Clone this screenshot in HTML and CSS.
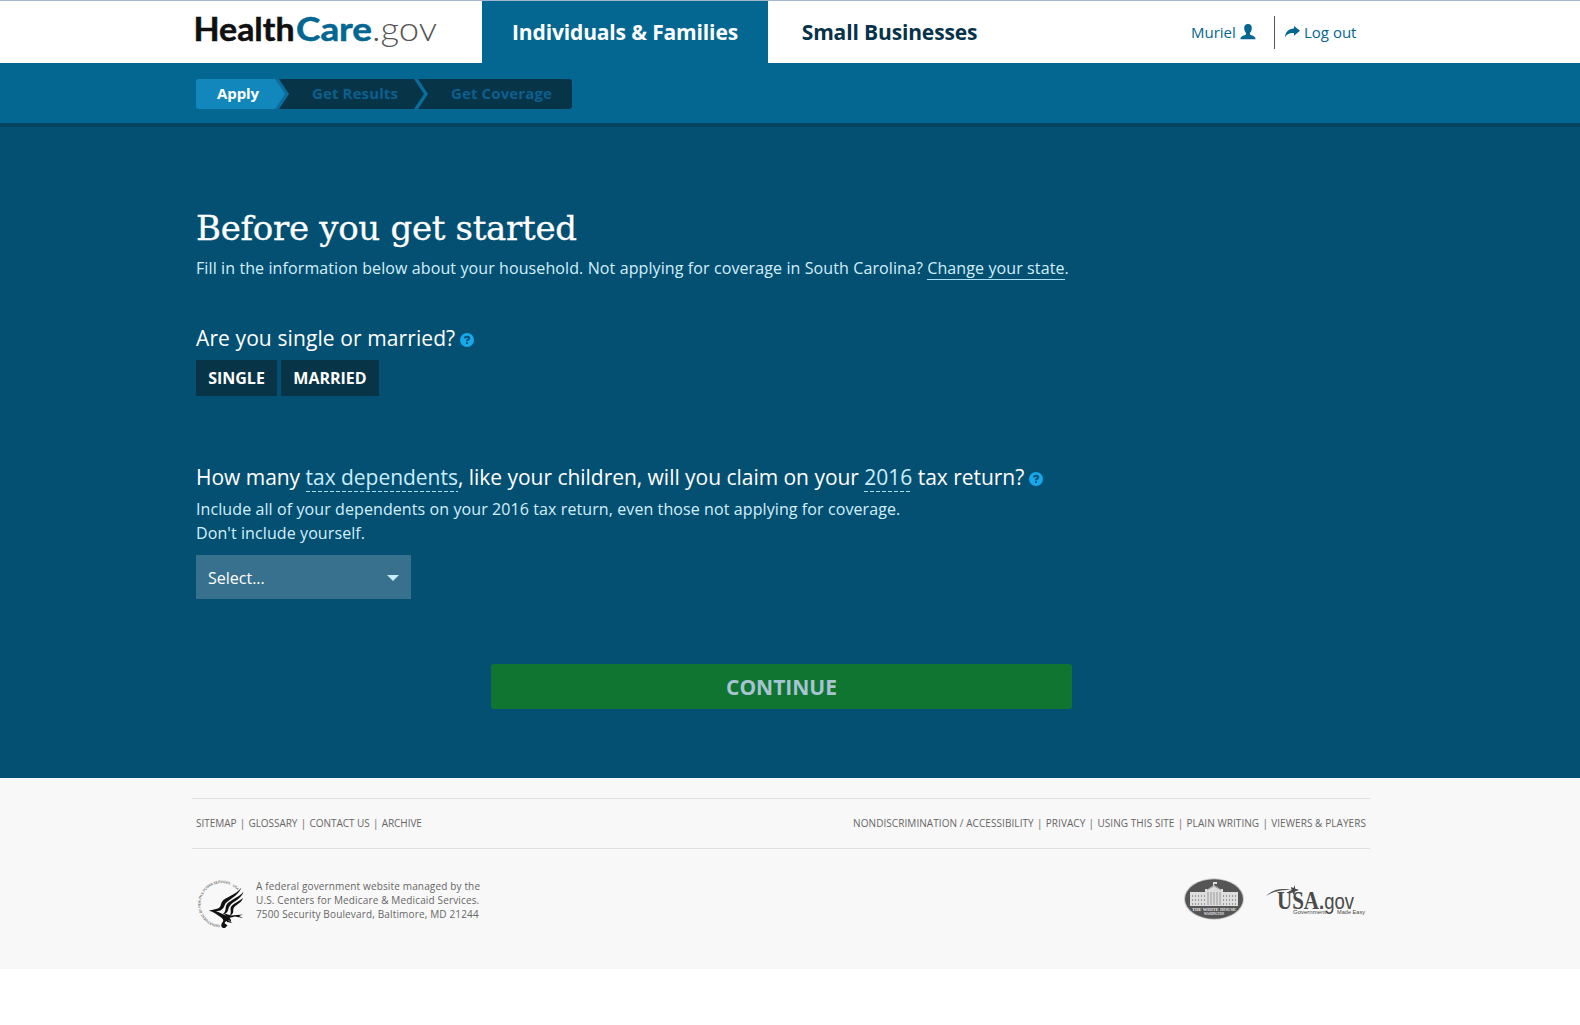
FILE: index.html
```html
<!DOCTYPE html>
<html lang="en">
<head>
<meta charset="utf-8">
<title>HealthCare.gov</title>
<link rel="stylesheet" href="styles.css">
</head>
<body>
<header class="header">
  <a class="logo">
    <svg width="244" height="40" viewBox="0 0 244 40" aria-label="HealthCare.gov">
      <text class="logo-bold" x="-2.500" y="31" textLength="101" lengthAdjust="spacingAndGlyphs">Health</text>
      <text class="logo-bold logo-blue" x="100" y="31" textLength="76" lengthAdjust="spacingAndGlyphs">Care</text>
      <text class="logo-light" x="176" y="31" textLength="65" lengthAdjust="spacingAndGlyphs">.gov</text>
    </svg>
  </a>
  <nav class="tabs">
    <a class="tab tab-active"><span>Individuals &amp; Families</span></a>
    <a class="tab"><span>Small Businesses</span></a>
  </nav>
  <div class="account">
    <a class="user">Muriel
      <svg width="16" height="16" viewBox="0 0 16 16"><path d="M8 0C10.500 0 11.800 1.500 11.800 4C11.800 6 11.100 7.800 10 8.900V10.500C10.700 11.500 15.600 11.600 15.600 15.200H0.400C0.400 11.600 5.300 11.500 6 10.500V8.900C4.900 7.800 4.200 6 4.200 4C4.200 1.500 5.500 0 8 0Z"/></svg>
    </a>
    <a class="logout">
      <svg width="15" height="12" viewBox="0 0 15 12"><path d="M9 0L15 4.800L9 9.700V7C5 6.700 2 7.500 0 11.300C.3 6 3.500 2.600 9 2.400Z"/></svg>
      <span>Log out</span>
    </a>
  </div>
</header>
<div class="progress-bar">
  <ol class="progress">
    <li class="step step-apply">Apply</li>
    <li class="step step-results">Get Results</li>
    <li class="step step-coverage">Get Coverage</li>
  </ol>
</div>
<main class="main">
  <h1 class="title">Before you get started</h1>
  <p class="intro">Fill in the information below about your household. Not applying for coverage in South Carolina? <a class="link">Change your state</a>.</p>
  <h2 class="question">Are you single or married?<svg class="help" width="14" height="14" viewBox="0 0 14 14"><circle cx="7" cy="7" r="7"/><path d="M4.800 5.400C4.900 3.200 9.200 3.100 9.200 5.300C9.200 6.800 7 6.600 7 8.300M7 9.300V11"/></svg></h2>
  <div class="choices">
    <button class="choice choice-single">SINGLE</button>
    <button class="choice choice-married">MARRIED</button>
  </div>
  <h2 class="question question-dependents">How many <a class="term">tax dependents</a>, like your children, will you claim on your <a class="term">2016</a> tax return?<svg class="help" width="14" height="14" viewBox="0 0 14 14"><circle cx="7" cy="7" r="7"/><path d="M4.800 5.400C4.900 3.200 9.200 3.100 9.200 5.300C9.200 6.800 7 6.600 7 8.300M7 9.300V11"/></svg></h2>
  <p class="hint">Include all of your dependents on your 2016 tax return, even those not applying for coverage.<br>Don't include yourself.</p>
  <div class="select"><span>Select...</span><i class="caret"></i></div>
  <button class="continue">CONTINUE</button>
</main>
<footer class="footer">
  <div class="links">
    <div class="links-left"><a>SITEMAP</a><i>|</i><a>GLOSSARY</a><i>|</i><a>CONTACT US</a><i>|</i><a>ARCHIVE</a></div>
    <div class="links-right"><a>NONDISCRIMINATION / ACCESSIBILITY</a><i>|</i><a>PRIVACY</a><i>|</i><a>USING THIS SITE</a><i>|</i><a>PLAIN WRITING</a><i>|</i><a>VIEWERS &amp; PLAYERS</a></div>
  </div>
  <div class="agency">
    <svg class="hhs" width="48" height="50" viewBox="0 0 48 50">
      <defs><path id="ring" d="M24 46A21 21 0 1 1 42 12"/></defs>
      <text class="ring-text"><textPath href="#ring" textLength="82" lengthAdjust="spacingAndGlyphs">DEPARTMENT OF HEALTH &amp; HUMAN SERVICES · USA</textPath></text>
      <g class="eagle">
        <path d="M45.500 8.500C40 16 30 18 26.500 22C24 25 26 29 20 30C17 30.800 15 31 13 32C20 33 27 32.500 28.500 26.500C30 21 42 18 45.500 8.500Z"/>
        <path d="M47.500 12.500C44 18 34 21 31 25C28.500 28 31 32 27 35C33 35 31.500 29.500 34 26.500C37 22.500 46 19.500 47.500 12.500Z"/>
        <path d="M47 19C44 22 38 24 35.500 27C33 30 36.500 33 33.500 37C39.500 34 36 31 38 28.500C40 25.500 45.500 24 47 19Z"/>
        <path d="M13 31C20 31 24 34 28 35.500C32 37 36 40 35 43C33 40.500 30 41.500 28.500 44L31.500 46.500L29 49C25 49.500 24 46 27 42.500C29 40 22 36 13 31Z"/>
        <path d="M27 34L35 36.500L47 35.500L43 37L47 39L39 37.500L33 39ZM30 40L36.500 44L31 43Z"/>
      </g>
    </svg>
    <p class="address">A federal government website managed by the<br>U.S. Centers for Medicare &amp; Medicaid Services.<br>7500 Security Boulevard, Baltimore, MD 21244</p>
    <svg class="whitehouse" width="60" height="42" viewBox="0 0 60 42">
      <ellipse class="wh-edge" cx="30" cy="21" rx="30" ry="20.700"/>
      <ellipse class="wh-disc" cx="30" cy="21" rx="29" ry="19.700"/>
      <path class="wh-house" d="M6 14H21V11H24L30 7L36 11H39V14H54V28H6ZM29 4H33V6H30V8H29Z"/>
      <path class="wh-windows" d="M8 18H21M39 18H53M8 22H21M39 22H53M8 26H21M39 26H53"/>
      <path class="wh-columns" d="M24 14V27M27 14V27M30 14V27M33 14V27M36 14V27M23 12L30 8L37 12"/>
      <text x="8" y="32.500" textLength="44" lengthAdjust="spacingAndGlyphs" class="wh-name">THE WHITE HOUSE</text>
      <text x="20" y="36.500" textLength="20" lengthAdjust="spacingAndGlyphs" class="wh-city">WASHINGTON</text>
    </svg>
    <svg class="usagov" width="100" height="32" viewBox="0 0 100 32">
      <path d="M0 11C7 4 17 3 25 5C15 4.500 8 6 0 11ZM29 0L29 3.500L33 5L29 6.500L28 10L26 7L22 7L25.500 5L25 2L27.500 3Z"/>
      <text class="usa" x="11" y="24" textLength="42" lengthAdjust="spacingAndGlyphs">USA</text>
      <text class="gov" x="53" y="24" textLength="35" lengthAdjust="spacingAndGlyphs"><tspan class="dot">.</tspan>gov</text>
      <text class="tag" x="27" y="29" textLength="33" lengthAdjust="spacingAndGlyphs">Government</text>
      <text class="tag" x="71" y="29" textLength="28" lengthAdjust="spacingAndGlyphs">Made Easy</text>
    </svg>
  </div>
</footer>
</body>
</html>
```
FILE: styles.css
```css
* { box-sizing: border-box; }
body { margin: 0; background: #fff; font-family: "Open Sans", "Noto Sans", sans-serif; color: #fff; }
h1, h2, p, ol { margin: 0; padding: 0; font-weight: 400; }
button { border: 0; padding: 0; font: inherit; color: inherit; }
i { font-style: normal; }

.header { display: flex; height: 63px; padding-left: 196px; border-top: 1px solid #a3b8d0; color: #05668f; }
.logo { width: 286px; padding-top: 9px; }
.logo svg { display: block; overflow: visible; }
.logo-bold { font: 700 32px Lato, sans-serif; fill: #101011; stroke: #101011; stroke-width: .5px; }
.logo-blue { fill: #046791; stroke: #046791; }
.logo-light { font: 300 33px Lato, sans-serif; fill: #555; }
.tabs { display: flex; }
.tab { display: flex; justify-content: center; width: 286px; line-height: 62px; font-size: 21px; font-weight: 700; letter-spacing: -.14px; color: #06334a; white-space: nowrap; }
.tab:last-child { width: 243px; }
.tab-active { background: #046791; color: #fff; }
.account { display: flex; align-items: center; margin-left: 180px; font-size: 15px; white-space: nowrap; }
.account svg { fill: #05668f; }
.user { display: flex; align-items: center; gap: 4px; height: 33px; width: 84px; border-right: 1px solid #555; }
.user svg { margin-top: -1px; }
.logout { display: flex; align-items: center; gap: 4px; padding-left: 10px; }

.progress-bar { height: 64px; padding: 16px 0 0 196px; background: #046791; border-bottom: 4px solid #04435f; }
.progress { display: flex; width: 376px; height: 30px; background: #0a6d9d; border-radius: 3px; overflow: hidden; list-style: none; }
.step { height: 30px; line-height: 29px; font-size: 15px; font-weight: 700; letter-spacing: .12px; background: #083447; color: #0b608f; white-space: nowrap; }
.step-apply { width: 89px; padding-left: 21px; letter-spacing: -.1px; background: #1287bc; color: #fff; clip-path: polygon(0 0, 79px 0, 100% 50%, 79px 100%, 0 100%); }
.step-results { width: 145px; margin-left: -6px; padding-left: 33px; clip-path: polygon(0 0, 135px 0, 100% 50%, 135px 100%, 0 100%, 10px 50%); }
.step-coverage { width: 154px; margin-left: -6px; padding-left: 33px; clip-path: polygon(0 0, 100% 0, 100% 100%, 0 100%, 10px 50%); }

.main { height: 651px; padding: 77px 0 0 196px; background: #045072; }
.title { height: 49px; line-height: 49px; font-family: "DejaVu Serif", serif; font-size: 34px; letter-spacing: -.3px; -webkit-text-stroke: .3px #fff; white-space: nowrap; }
.intro { height: 30px; line-height: 30px; font-size: 16px; letter-spacing: .105px; color: #d3effc; white-space: nowrap; }
.link { border-bottom: 1px solid #a6e0fb; }
.question { display: flex; align-items: center; height: 32px; margin-top: 39px; line-height: 32px; font-size: 21px; letter-spacing: .1px; white-space: pre; }
.help { margin: 3px 0 0 5px; fill: #17a7ed; }
.help path { fill: none; stroke: #045072; stroke-width: 2; }
.choices { display: flex; gap: 4px; margin-top: 6px; }
.choice { height: 36px; line-height: 36px; background: #083447; font-size: 16px; font-weight: 700; }
.choice-single { width: 81px; }
.choice-married { width: 98px; }
.question-dependents { margin-top: 65px; letter-spacing: -.03px; }
.term { height: 30px; line-height: 30px; color: #c9edfd; background: repeating-linear-gradient(90deg, #a6e0fb 0 4px, transparent 4px 6px) 0 100% / 100% 1px no-repeat; }
.hint { margin-top: 4px; line-height: 24px; font-size: 16px; letter-spacing: .095px; color: #d3effc; white-space: nowrap; }
.select { display: flex; align-items: center; justify-content: space-between; width: 215px; height: 44px; margin-top: 10px; padding: 2px 12px 0; background: #38718d; font-size: 16px; }
.caret { border: 6px solid transparent; border-top-color: #c9edfd; border-bottom: 0; }
.continue { display: block; width: 581px; height: 45px; margin: 65px 0 0 295px; background: #0f7531; border-radius: 3px; font-size: 21px; font-weight: 700; color: #a7c4d2; }

.footer { height: 191px; padding: 20px 210px 0 192px; background: #f8f8f8; color: #666; font-size: 10px; }
.links { display: flex; justify-content: space-between; height: 51px; padding: 0 4px; line-height: 49px; border: solid #dfdfdf; border-width: 1px 0; white-space: nowrap; }
.links i { display: inline-block; width: 12px; text-align: center; }
.links-left { letter-spacing: -.04px; }
.links-right { letter-spacing: .07px; }
.agency { display: flex; align-items: flex-start; padding: 30px 4px 0; }
.hhs { overflow: visible; }
.ring-text { font: 3.500px "Liberation Sans", sans-serif; fill: #333; }
.eagle { fill: #111; }
.address { width: 300px; margin: 0 0 0 12px; line-height: 14px; letter-spacing: .15px; white-space: nowrap; }
.whitehouse { margin: -1px 0 0 628px; }
.wh-edge { fill: #c8c8c8; }
.wh-disc { fill: #555; }
.wh-house { fill: #ddd; }
.wh-windows, .wh-columns { fill: none; stroke: #999; stroke-width: 1; }
.wh-windows { stroke-dasharray: 1 2; stroke-width: 2; }
.wh-name { font: 700 4.500px "Liberation Serif", serif; fill: #eee; }
.wh-city { font: 700 3px "Liberation Serif", serif; fill: #eee; }
.usagov { margin: 6px 0 0 22px; fill: #4a4a4a; overflow: visible; }
.usa { font: 700 26px "Liberation Serif", serif; }
.gov { font: 22px "Liberation Sans", sans-serif; }
.dot { font-weight: 700; }
.tag { font: 5.500px "Liberation Sans", sans-serif; }
```
